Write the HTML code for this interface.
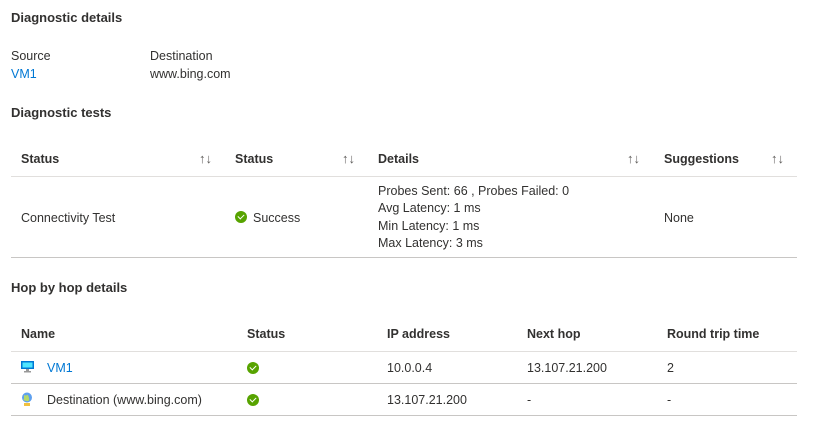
<!DOCTYPE html><html><head><style>
body{margin:0;width:813px;height:430px;background:#fff;font-family:"Liberation Sans",sans-serif;font-size:12.5px;color:#323130;position:relative;overflow:hidden}
div{position:absolute;white-space:nowrap;line-height:16px}
.b{font-weight:bold}
.h{font-weight:bold;font-size:13px}
.l{color:#0078d4}
.line{height:1px;background:#e1dfdd;left:11px;width:786px}
.dk{background:#c8c6c4}
.s{color:#605e5c;font-size:13px}
.ok{width:12px;height:12px;border-radius:50%;background:#57a300}
.ok:after{content:"";position:absolute;left:3px;top:2.5px;width:5px;height:3px;border-left:1.8px solid #fff;border-bottom:1.8px solid #fff;transform:rotate(-45deg)}
</style></head><body>
<div class="h" style="left:11px;top:10px">Diagnostic details</div>
<div style="left:11px;top:48px">Source</div>
<div class="l" style="left:11px;top:66px">VM1</div>
<div style="left:150px;top:48px">Destination</div>
<div style="left:150px;top:66px">www.bing.com</div>
<div class="h" style="left:11px;top:105px">Diagnostic tests</div>
<div class="b" style="left:21px;top:151px">Status</div><div class="s" style="left:199px;top:151px">↑↓</div>
<div class="b" style="left:235px;top:151px">Status</div><div class="s" style="left:342px;top:151px">↑↓</div>
<div class="b" style="left:378px;top:151px">Details</div><div class="s" style="left:627px;top:151px">↑↓</div>
<div class="b" style="left:664px;top:151px">Suggestions</div><div class="s" style="left:771px;top:151px">↑↓</div>
<div class="line" style="top:176px"></div>
<div style="left:21px;top:210px">Connectivity Test</div>
<div class="ok" style="left:235px;top:211px"></div>
<div style="left:253px;top:210px">Success</div>
<div style="left:378px;top:183px;line-height:17.3px">Probes Sent: 66 , Probes Failed: 0<br>Avg Latency: 1 ms<br>Min Latency: 1 ms<br>Max Latency: 3 ms</div>
<div style="left:664px;top:210px">None</div>
<div class="line dk" style="top:257px"></div>
<div class="h" style="left:11px;top:280px">Hop by hop details</div>
<div class="b" style="left:21px;top:326px">Name</div>
<div class="b" style="left:247px;top:326px">Status</div>
<div class="b" style="left:387px;top:326px">IP address</div>
<div class="b" style="left:527px;top:326px">Next hop</div>
<div class="b" style="left:667px;top:326px">Round trip time</div>
<div class="line" style="top:351px"></div>
<svg style="position:absolute;left:21px;top:361px" width="13" height="12"><rect x="0" y="0" width="13" height="8" fill="#0078d4"/><rect x="1.5" y="1.5" width="10" height="5" fill="#50e6ff"/><rect x="5" y="8" width="3" height="2" fill="#999"/><rect x="3" y="10" width="7" height="1.5" fill="#999"/></svg>
<div class="l" style="left:47px;top:360px">VM1</div>
<div class="ok" style="left:247px;top:362px"></div>
<div style="left:387px;top:360px">10.0.0.4</div>
<div style="left:527px;top:360px">13.107.21.200</div>
<div style="left:667px;top:360px">2</div>
<div class="line dk" style="top:383px"></div>
<svg style="position:absolute;left:21px;top:392px" width="12" height="14"><circle cx="6" cy="5.5" r="5" fill="#5ea0ef"/><path d="M3 3q2 1 3 0t2 3-3 3-2-2z" fill="#b4d86b"/><rect x="3" y="11" width="6" height="3" fill="#f0c040"/></svg>
<div style="left:47px;top:392px">Destination (www.bing.com)</div>
<div class="ok" style="left:247px;top:394px"></div>
<div style="left:387px;top:392px">13.107.21.200</div>
<div style="left:527px;top:392px">-</div>
<div style="left:667px;top:392px">-</div>
<div class="line dk" style="top:415px"></div>
</body></html>
